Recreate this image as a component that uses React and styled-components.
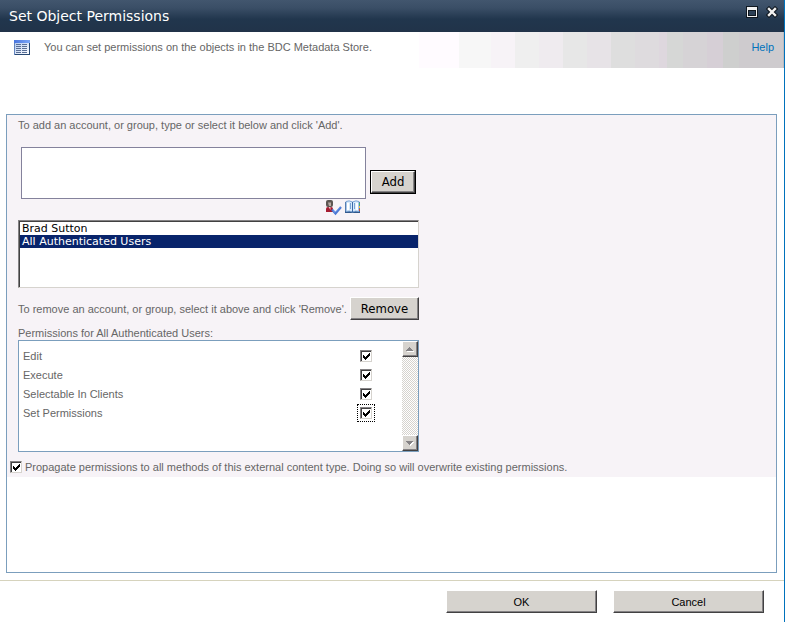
import React, { useState } from "react";
import styled, { createGlobalStyle, css } from "styled-components";

const narrow = '"Liberation Sans", Arial, sans-serif';
const condensed = '"DejaVu Sans Condensed", "Noto Sans", sans-serif';
const wide = '"DejaVu Sans", "Liberation Sans", sans-serif';

const tick =
  "url(\"data:image/svg+xml,%3Csvg xmlns='http://www.w3.org/2000/svg' width='7' height='7' shape-rendering='crispEdges'%3E%3Cpath d='M0 2h1v1h1v1h1v-1h1v-1h1v-1h1v-1h1v3h-1v1h-1v1h-1v1h-1v1h-1v-1h-1v-1h-1z'/%3E%3C/svg%3E\")";

const GlobalStyle = createGlobalStyle`
  *, *::before, *::after { box-sizing: border-box; }
  body { margin: 0; background: #fff; color: #666; font: 11px/14px ${narrow}; }
  button, input, select, textarea { margin: 0; font: inherit; }
`;

const raised = css`
  background: #d6d3ce;
  border: 1px solid;
  border-color: #fff #424142 #424142 #fff;
  box-shadow: inset -1px -1px #848284;
`;

const Dialog = styled.main`
  display: flex;
  flex-direction: column;
  min-height: 100vh;
  border-right: 1px solid #0072bc;
`;

const TitleBar = styled.header`
  display: flex;
  align-items: center;
  justify-content: space-between;
  height: 32px;
  padding: 0 6px 0 9px;
  background: linear-gradient(#42566e, #3a4e66 25%, #21364d 60%, #213349);
`;

const Title = styled.h1`
  margin: 0;
  color: #fff;
  font: 14px/20px ${wide};
`;

const WindowButtons = styled.div`
  display: flex;
  gap: 8px;
  padding-bottom: 8px;
`;

const IconButton = styled.button`
  display: flex;
  padding: 0;
  border: 0;
  background: none;
`;

const Banner = styled.div`
  display: flex;
  height: 36px;
  padding: 8px 10px 0 14px;
  background: linear-gradient(
    to left,
    #bdbabd 1px, #cecbce 1px 45px, #cecfce 45px 61px, #d6cfd6 61px 77px,
    #d6d3d6 77px 101px, #d6d7d6 101px 117px, #ded7de 117px 125px,
    #dedbde 125px 149px, #dedede 149px 173px, #e7e3e7 173px 197px,
    #e7e7e7 197px 221px, #efebef 221px 245px, #efefef 245px 269px,
    #f7f3f7 269px 293px, #f7f7f7 293px 325px, #fffbff 325px 365px, #fff 365px
  );
`;

const BannerText = styled.p`
  flex: 1;
  margin: 0 0 0 14px;
`;

const HelpLink = styled.a`
  color: #0072bc;
  text-decoration: none;
`;

const Panel = styled.section`
  flex: 1;
  margin: 46px 7px 7px 6px;
  border: 1px solid #7b9ebd;
`;

const Form = styled.form`
  padding: 3px;
  background: #f7f3f7;
`;

const Group = styled.div`
  display: flex;
  flex-direction: column;
  max-width: 409px;
  padding-left: 8px;
`;

const AddRow = styled.div`
  display: flex;
  align-items: flex-end;
  gap: 4px;
  padding: 15px 3px 0 3px;
`;

const AccountBox = styled.textarea`
  flex: 1;
  min-width: 0;
  height: 52px;
  border: 1px solid #84829c;
  border-radius: 0;
  background: #fff;
  resize: none;
  outline: none;
`;

const DefaultFrame = styled.span`
  display: flex;
  margin-bottom: 5px;
  border: 1px solid #000;
`;

const ActionButton = styled.button`
  ${raised}
  flex: none;
  width: ${(p) => p.$width}px;
  height: ${(p) => p.$height}px;
  padding: 0;
  color: #000;
  font: 13px/16px ${condensed};
`;

const Tools = styled.div`
  display: flex;
  justify-content: flex-end;
  gap: 3px;
  height: 21px;
  padding: 1px 58px 0 0;
`;

const AccountList = styled.select`
  height: 68px;
  padding: 1px 0 0 1px;
  border: 1px solid;
  border-color: #848284 #d6d3ce #d6d3ce #848284;
  border-radius: 0;
  box-shadow: inset 1px 1px #424142;
  background: #fff;
  color: #000;
  font: 11px/13px ${wide};
  outline: 0;
  overflow: hidden;

  option {
    min-height: 13px;
    height: 13px;
    padding: 0 2px;
  }
  option:checked {
    background: linear-gradient(#08246b, #08246b);
    -webkit-text-fill-color: #fff;
  }
`;

const RemoveRow = styled.div`
  display: flex;
  align-items: center;
  justify-content: space-between;
  margin: 9px 0 6px;
`;

const Caption = styled.label`
  display: block;
  white-space: nowrap;
`;

const PermissionBox = styled.div`
  display: flex;
  height: 112px;
  border: 1px solid #7b9ebd;
  background: #fff;
`;

const PermissionRows = styled.div`
  flex: 1;
  padding: 5px 30px 0 4px;
`;

const PermissionRow = styled.label`
  display: flex;
  align-items: center;
  justify-content: space-between;
  height: 19px;
`;

const CheckBox = styled.input`
  appearance: none;
  flex: none;
  width: 12px;
  height: 12px;
  border: 1px solid;
  border-color: #848284 #d6d3ce #d6d3ce #848284;
  box-shadow: inset 1px 1px #424142;
  background: #fff;
  &:checked {
    background: #fff ${tick} 2px 2px no-repeat;
  }
  ${(p) => p.$marked && "outline: 1px dotted #000; outline-offset: 2px;"}
`;

const ScrollBar = styled.div`
  display: flex;
  flex-direction: column;
  justify-content: space-between;
  width: 16px;
  background: repeating-conic-gradient(#d6d3ce 0 25%, #fff 0 50%) 0 0 / 2px 2px;
`;

const ScrollButton = styled.button`
  ${raised}
  display: flex;
  align-items: center;
  justify-content: center;
  width: 16px;
  height: 16px;
  padding: 0;
`;

const Propagate = styled.label`
  display: flex;
  align-items: center;
  gap: 3px;
  margin-top: 8px;
`;

const Footer = styled.footer`
  display: flex;
  justify-content: flex-end;
  gap: 16px;
  padding: 9px 20px 9px;
  border-top: 1px solid #d6d3bd;
`;

const FooterButton = styled.button`
  ${raised}
  width: 151px;
  height: 23px;
  padding: 0;
  color: #000;
`;

const ListIcon = () => (
  <svg width="16" height="15" shapeRendering="crispEdges" aria-hidden="true">
    <defs>
      <linearGradient id="listHead">
        <stop stopColor="#4a75de" />
        <stop offset="1" stopColor="#7ba6f7" />
      </linearGradient>
      <linearGradient id="listBody" x2="1" y2="1">
        <stop stopColor="#b5cbf0" />
        <stop offset="1" stopColor="#fff" />
      </linearGradient>
    </defs>
    <rect width="16" height="15" fill="#6384bd" />
    <rect x="1" y="3" width="14" height="11" fill="url(#listBody)" />
    <rect width="16" height="3" fill="url(#listHead)" />
    <path d="M15 3h1v12H1v-1h14z" fill="#294973" />
    <path
      d="M2 4.5h5M8 4.5h5M2 6.5h5M8 6.5h5M2 8.5h5M8 8.5h5M2 10.5h5M8 10.5h5M2 12.5h5M8 12.5h5"
      stroke="#5a6f96"
    />
  </svg>
);

const MaximizeIcon = () => (
  <svg width="12" height="12" shapeRendering="crispEdges" aria-hidden="true">
    <rect width="12" height="12" fill="#101820" />
    <path d="M1 1h10v10H1zM2 4v6h8V4z" fill="#f2f2f2" fillRule="evenodd" />
    <path d="M2.5 4.5h7v5h-7z" fill="#2b3f55" stroke="#101820" />
  </svg>
);

const CloseIcon = () => (
  <svg width="12" height="12" aria-hidden="true">
    <path d="M3 3l6 6M9 3l-6 6" stroke="#101820" strokeWidth="4.5" strokeLinecap="square" />
    <path d="M3 3l6 6M9 3l-6 6" stroke="#f2f2f2" strokeWidth="2.4" strokeLinecap="square" />
  </svg>
);

const CheckNameIcon = () => (
  <svg width="17" height="16" aria-hidden="true">
    <path d="M1 12V9q0-2 2-2h3q2 0 2 2v3z" fill="#a51c31" />
    <path d="M3.5 7h2v3z" fill="#f0c8c8" />
    <rect x="1" y="0" width="7" height="7" rx="2" fill="#5c5652" />
    <path d="M3 2.5h3V6H4z" fill="#b8aaa4" />
    <path d="M7 9.5l3.5 4L16 7" fill="none" stroke="#4a78d4" strokeWidth="2.2" />
    <path d="M8 10.5l2 1.8 5-5" fill="none" stroke="#83abf2" strokeWidth="0.8" />
  </svg>
);

const BookIcon = () => (
  <svg width="16" height="14" aria-hidden="true">
    <path d="M0 2h15v11H0z" fill="#31598c" />
    <path d="M1 1.5Q4 0 7.5 2 11 0 14 1.5v10q-3.500-1-6.500.5-3-1.500-6.500-.5z" fill="#d8ebfc" stroke="#7ba3d4" />
    <path d="M7.5 2v10" stroke="#3a69a8" />
    <path d="M5.5 3v6M9.5 3v6" stroke="#7ba3d4" />
    <path d="M3 3v7M12 3v7" stroke="#fff" strokeWidth="2" />
    <path d="M14 3h1v2h-1z" fill="#42b56b" />
    <path d="M14 6h1v2h-1z" fill="#f7c642" />
    <path d="M14 9h1v2h-1z" fill="#d64531" />
  </svg>
);

const Arrow = ({ down }) => (
  <svg width="8" height="5" shapeRendering="crispEdges" aria-hidden="true">
    <path d={down ? "M1 1h7L4.5 5z" : "M1 5h7v-1L4.5 1 1 4z"} fill="#fff" />
    <path d={down ? "M0 0h7v1h-1v1h-1v1h-1v1h-1v-1h-1v-1h-1v-1h-1z" : "M3 0h1v1h1v1h1v1h1v1h-7v-1h1v-1h1v-1h1z"} fill="#848284" />
  </svg>
);

const permissions = ["Edit", "Execute", "Selectable In Clients", "Set Permissions"];

export default function App() {
  const [account, setAccount] = useState("All Authenticated Users");

  return (
    <Dialog>
      <GlobalStyle />
      <TitleBar>
        <Title>Set Object Permissions</Title>
        <WindowButtons>
          <IconButton type="button" aria-label="Maximize"><MaximizeIcon /></IconButton>
          <IconButton type="button" aria-label="Close"><CloseIcon /></IconButton>
        </WindowButtons>
      </TitleBar>
      <Banner>
        <ListIcon />
        <BannerText>You can set permissions on the objects in the BDC Metadata Store.</BannerText>
        <HelpLink href="#help">Help</HelpLink>
      </Banner>
      <Panel>
        <Form id="permissions" onSubmit={(e) => e.preventDefault()}>
          <Group>
            <Caption htmlFor="new-account">
              To add an account, or group, type or select it below and click 'Add'.
            </Caption>
            <AddRow>
              <AccountBox id="new-account" />
              <DefaultFrame>
                <ActionButton type="button" $width={44} $height={22}>Add</ActionButton>
              </DefaultFrame>
            </AddRow>
            <Tools>
              <IconButton type="button" aria-label="Check names"><CheckNameIcon /></IconButton>
              <IconButton type="button" aria-label="Browse"><BookIcon /></IconButton>
            </Tools>
            <AccountList
              id="accounts"
              size={5}
              value={account}
              onChange={(e) => setAccount(e.target.value)}
            >
              <option>Brad Sutton</option>
              <option>All Authenticated Users</option>
            </AccountList>
            <RemoveRow>
              <Caption htmlFor="accounts">
                To remove an account, or group, select it above and click 'Remove'.
              </Caption>
              <ActionButton type="button" $width={69} $height={23}>Remove</ActionButton>
            </RemoveRow>
            <Caption as="div" id="permission-caption">Permissions for {account}:</Caption>
            <PermissionBox role="group" aria-labelledby="permission-caption">
              <PermissionRows>
                {permissions.map((name) => (
                  <PermissionRow key={name}>
                    {name}
                    <CheckBox type="checkbox" defaultChecked $marked={name === "Set Permissions"} />
                  </PermissionRow>
                ))}
              </PermissionRows>
              <ScrollBar>
                <ScrollButton type="button" aria-label="Scroll up"><Arrow /></ScrollButton>
                <ScrollButton type="button" aria-label="Scroll down"><Arrow down /></ScrollButton>
              </ScrollBar>
            </PermissionBox>
          </Group>
          <Propagate>
            <CheckBox type="checkbox" defaultChecked />
            Propagate permissions to all methods of this external content type. Doing so will overwrite existing permissions.
          </Propagate>
        </Form>
      </Panel>
      <Footer>
        <FooterButton type="submit" form="permissions">OK</FooterButton>
        <FooterButton type="button">Cancel</FooterButton>
      </Footer>
    </Dialog>
  );
}
